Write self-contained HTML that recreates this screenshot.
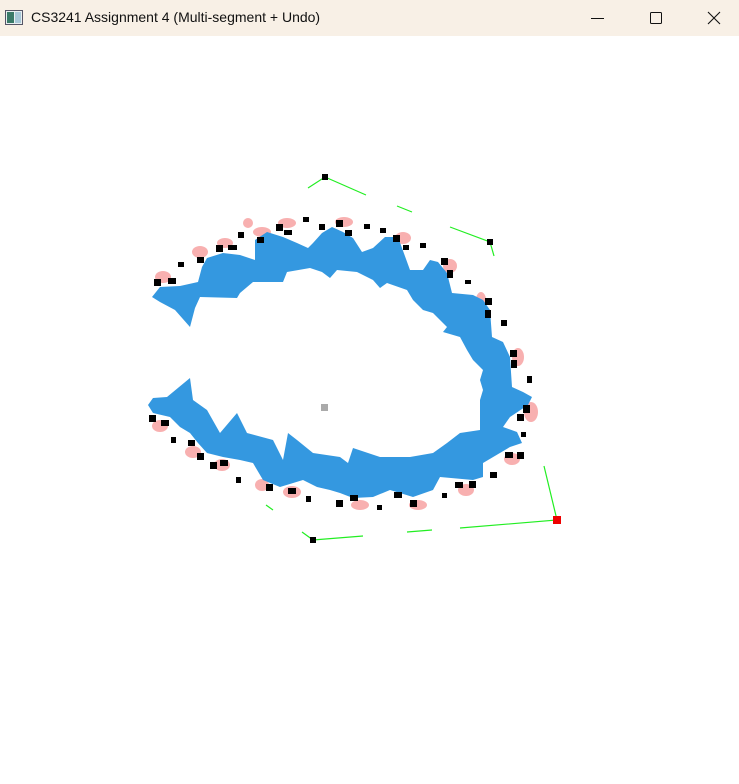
<!DOCTYPE html>
<html><head><meta charset="utf-8"><style>
html,body{margin:0;padding:0;width:739px;height:784px;overflow:hidden;background:#fff;font-family:"Segoe UI","Liberation Sans",sans-serif}
.tb{position:absolute;left:0;top:0;width:739px;height:36px;background:#f8f0e6}
.tt{position:absolute;left:31px;top:9px;font-size:14px;color:#111}
</style></head><body>
<div class="tb">
<svg width="739" height="36" style="position:absolute;left:0;top:0">
<rect x="5.5" y="10.5" width="17" height="14" fill="#e8eef0" stroke="#556" />
<rect x="7" y="12" width="7" height="11" fill="#3a7a68"/>
<rect x="15" y="12" width="6" height="11" fill="#a8c8d8"/>
<line x1="591" y1="18.5" x2="604" y2="18.5" stroke="#111" stroke-width="1"/>
<rect x="650.5" y="12.5" width="11" height="11" rx="1" fill="none" stroke="#111"/>
<path d="M708 12 L720 24 M720 12 L708 24" stroke="#111" stroke-width="1.1"/>
</svg>
<div class="tt">CS3241 Assignment 4 (Multi-segment + Undo)</div>
</div>
<svg width="739" height="784" style="position:absolute;left:0;top:0">
<g fill="#f8b0b0">
<ellipse cx="163" cy="277" rx="8" ry="6"/><ellipse cx="200" cy="252" rx="8" ry="6"/><ellipse cx="225" cy="243" rx="8" ry="5"/>
<ellipse cx="262" cy="232" rx="9" ry="5"/><ellipse cx="287" cy="223" rx="9" ry="5"/><ellipse cx="344" cy="222" rx="9" ry="5"/>
<ellipse cx="403" cy="238" rx="8" ry="6"/><ellipse cx="450" cy="266" rx="7" ry="7"/><ellipse cx="481" cy="300" rx="5" ry="8"/>
<ellipse cx="518" cy="357" rx="6" ry="9"/><ellipse cx="531" cy="412" rx="7" ry="10"/><ellipse cx="512" cy="459" rx="8" ry="6"/>
<ellipse cx="466" cy="490" rx="8" ry="6"/><ellipse cx="418" cy="505" rx="9" ry="5"/><ellipse cx="360" cy="505" rx="9" ry="5"/>
<ellipse cx="292" cy="492" rx="9" ry="6"/><ellipse cx="262" cy="485" rx="7" ry="6"/><ellipse cx="222" cy="465" rx="8" ry="6"/>
<ellipse cx="193" cy="452" rx="8" ry="6"/><ellipse cx="160" cy="426" rx="8" ry="6"/><ellipse cx="248" cy="223" rx="5" ry="5"/>
</g>
<path fill="#3498e0" d="M152 297 L160 287 L180 286 L198 282 L202 267 L207 258 L223 253 L240 255 L255 260 L255 240 L267 232 L283 237 L297 243 L308 248 L313 243 L322 233 L332 227 L343 232 L353 238 L362 252 L373 248 L385 237 L398 237 L410 270 L423 270 L430 260 L438 262 L447 273 L452 293 L473 295 L483 300 L490 310 L492 337 L503 342 L510 357 L512 387 L523 392 L532 397 L528 405 L510 417 L503 427 L517 432 L522 443 L510 447 L483 463 L483 477 L473 480 L440 477 L433 490 L413 497 L400 493 L390 490 L373 497 L353 498 L340 493 L330 490 L317 487 L303 480 L280 487 L263 480 L253 463 L240 460 L223 457 L207 453 L198 443 L190 433 L180 427 L170 417 L153 413 L148 405 L153 398 L167 397 L190 378 L193 400 L207 410 L220 433 L237 413 L247 433 L273 440 L283 460 L288 433 L297 440 L313 453 L340 457 L348 463 L353 448 L380 457 L410 457 L433 453 L440 448 L447 443 L460 433 L480 430 L480 417 L480 400 L483 390 L480 380 L483 370 L473 360 L467 350 L460 337 L443 332 L447 327 L433 313 L423 310 L413 300 L407 290 L387 283 L380 288 L373 280 L357 272 L337 270 L330 278 L322 272 L310 268 L287 272 L283 282 L253 282 L240 293 L237 298 L200 297 L195 308 L190 327 L175 310 L160 302 Z"/>
<g fill="#000">
<rect x="154" y="279" width="7" height="7"/><rect x="168" y="278" width="8" height="6"/><rect x="178" y="262" width="6" height="5"/>
<rect x="197" y="257" width="7" height="6"/><rect x="216" y="245" width="7" height="7"/><rect x="228" y="245" width="9" height="5"/>
<rect x="238" y="232" width="6" height="6"/><rect x="257" y="237" width="7" height="6"/><rect x="276" y="224" width="7" height="7"/>
<rect x="284" y="230" width="8" height="5"/><rect x="303" y="217" width="6" height="5"/><rect x="319" y="224" width="6" height="6"/>
<rect x="336" y="220" width="7" height="7"/><rect x="345" y="230" width="7" height="6"/><rect x="364" y="224" width="6" height="5"/>
<rect x="380" y="228" width="6" height="5"/><rect x="393" y="235" width="7" height="7"/><rect x="403" y="245" width="6" height="5"/>
<rect x="420" y="243" width="6" height="5"/><rect x="441" y="258" width="7" height="7"/><rect x="447" y="270" width="6" height="8"/>
<rect x="465" y="280" width="6" height="4"/><rect x="485" y="298" width="7" height="7"/><rect x="485" y="310" width="6" height="8"/>
<rect x="501" y="320" width="6" height="6"/><rect x="510" y="350" width="7" height="7"/><rect x="511" y="360" width="6" height="8"/>
<rect x="527" y="376" width="5" height="7"/><rect x="517" y="414" width="7" height="7"/><rect x="523" y="405" width="7" height="8"/>
<rect x="521" y="432" width="5" height="5"/><rect x="517" y="452" width="7" height="7"/><rect x="505" y="452" width="8" height="6"/>
<rect x="490" y="472" width="7" height="6"/><rect x="469" y="481" width="7" height="7"/><rect x="455" y="482" width="8" height="6"/>
<rect x="442" y="493" width="5" height="5"/><rect x="410" y="500" width="7" height="7"/><rect x="394" y="492" width="8" height="6"/>
<rect x="377" y="505" width="5" height="5"/><rect x="336" y="500" width="7" height="7"/><rect x="350" y="495" width="8" height="6"/>
<rect x="306" y="496" width="5" height="6"/><rect x="266" y="484" width="7" height="7"/><rect x="288" y="488" width="8" height="6"/>
<rect x="236" y="477" width="5" height="6"/><rect x="210" y="462" width="7" height="7"/><rect x="220" y="460" width="8" height="6"/>
<rect x="197" y="453" width="7" height="7"/><rect x="188" y="440" width="7" height="6"/><rect x="171" y="437" width="5" height="6"/>
<rect x="149" y="415" width="7" height="7"/><rect x="161" y="420" width="8" height="6"/>
</g>
<g stroke="#22ee22" stroke-width="1.2" fill="none">
<polyline points="308,188 325,177 366,195"/><line x1="397" y1="206" x2="412" y2="212"/>
<polyline points="450,227 490,242 494,256"/><polyline points="544,466 557,520 460,528"/>
<line x1="432" y1="530" x2="407" y2="532"/><polyline points="363,536 313,540 302,532"/><line x1="266" y1="505" x2="273" y2="510"/>
</g>
<rect x="322" y="174" width="6" height="6" fill="#000"/><rect x="487" y="239" width="6" height="6" fill="#000"/>
<rect x="310" y="537" width="6" height="6" fill="#000"/><rect x="553" y="516" width="8" height="8" fill="#ee0000"/>
<rect x="321" y="404" width="7" height="7" fill="#aaa"/>
</svg>
</body></html>
